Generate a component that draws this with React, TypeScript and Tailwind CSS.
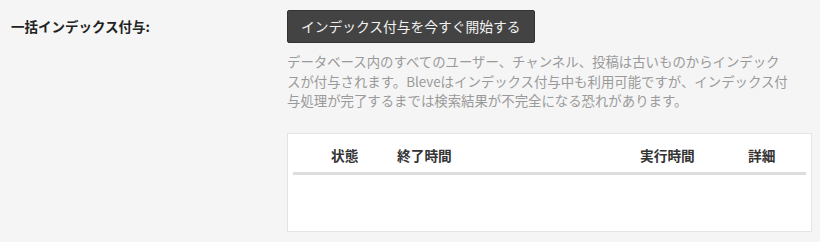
import React from "react";

const cjk = { fontFamily: '"Noto Sans CJK JP", "Noto Sans", sans-serif' };

export default function App() {
  return (
    <div
      className="w-[820px] h-[242px] bg-[#f5f5f5] text-[#333] overflow-hidden"
      style={cjk}
    >
      <div className="flex pt-[10px] pl-[11px]">
        {/* label column */}
        <div className="w-[276px] shrink-0 h-[33px] flex items-center">
          <span className="text-[13.5px] font-bold text-[#222]">一括インデックス付与:</span>
        </div>

        {/* settings column */}
        <div className="w-[525px] flex flex-col">
          <div>
            <button className="h-[33px] px-[13px] bg-[#434343] border border-[#333] rounded-[2px] text-[13.75px] text-[#f2f2f2] leading-none">
              インデックス付与を今すぐ開始する
            </button>
          </div>

          <p className="mt-[9px] text-[13.4px] leading-[19.5px] text-[#9a9a9a] whitespace-nowrap">
            データベース内のすべてのユーザー、チャンネル、投稿は古いものからインデック
            <br />
            スが付与されます。Bleveはインデックス付与中も利用可能ですが、インデックス付
            <br />
            与処理が完了するまでは検索結果が不完全になる恐れがあります。
          </p>

          {/* job table */}
          <div className="mt-[22px] h-[99px] bg-white border border-[#e4e4e4] px-[5px] pt-[5px]">
            <div className="grid grid-cols-[30px_66px_243px_108px_67px] h-[36px] items-center border-b-[3px] border-[#dddddd] text-[13.7px] font-bold text-[#333]">
              <div />
              <div className="pl-[8px]">状態</div>
              <div className="pl-[8px]">終了時間</div>
              <div className="pl-[8px]">実行時間</div>
              <div className="pl-[8px]">詳細</div>
            </div>
          </div>
        </div>
      </div>
    </div>
  );
}
